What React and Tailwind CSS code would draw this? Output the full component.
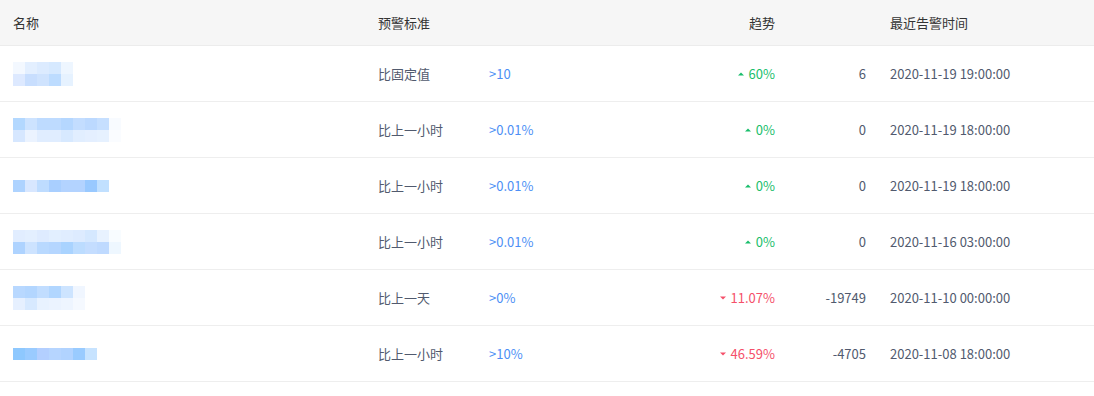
import React from "react";

const rows = [
  {
    blur: [
      ["#f3f8ff", "#e3efff", "#dcebff", "#d6e9ff", "#eef6ff"],
      ["#dde9ff", "#c8defe", "#cfe3fe", "#bddcff", "#e6f2ff"],
    ],
    crit: "比固定值",
    val: ">10",
    up: true,
    trend: "60%",
    count: "6",
    time: "2020-11-19 19:00:00",
  },
  {
    blur: [
      ["#b3d8ff", "#cde3ff", "#bedbff", "#bedbff", "#b5d7ff", "#c3ddff", "#bcd9ff", "#c6dfff", "#f8fbff"],
      ["#d6e7ff", "#ebf3ff", "#e0edff", "#e0edff", "#d7e9ff", "#e1eeff", "#e4efff", "#e6f1ff", "#fafcff"],
    ],
    crit: "比上一小时",
    val: ">0.01%",
    up: true,
    trend: "0%",
    count: "0",
    time: "2020-11-19 18:00:00",
  },
  {
    blur: [["#aed3ff", "#d8e7ff", "#bedcff", "#a9cfff", "#b3d3ff", "#b3d3ff", "#99c9ff", "#c1e0ff"]],
    crit: "比上一小时",
    val: ">0.01%",
    up: true,
    trend: "0%",
    count: "0",
    time: "2020-11-19 18:00:00",
  },
  {
    blur: [
      ["#e1edff", "#e3efff", "#deebff", "#e2efff", "#e0edff", "#ddebff", "#d5e8ff", "#e8f2ff", "#f8fcff"],
      ["#aed3ff", "#cde3ff", "#b9d9ff", "#b5d6ff", "#a9d3ff", "#bcdcff", "#c4ddff", "#bfdaff", "#eef7ff"],
    ],
    crit: "比上一小时",
    val: ">0.01%",
    up: true,
    trend: "0%",
    count: "0",
    time: "2020-11-16 03:00:00",
  },
  {
    blur: [
      ["#b8d8ff", "#b3d6ff", "#c1ddff", "#b1d6ff", "#cde4ff", "#f0f6ff"],
      ["#e6f0ff", "#d7e9ff", "#e8f2ff", "#ebf3ff", "#eef5ff", "#f5f9ff"],
    ],
    crit: "比上一天",
    val: ">0%",
    up: false,
    trend: "11.07%",
    count: "-19749",
    time: "2020-11-10 00:00:00",
  },
  {
    blur: [["#8ec8fe", "#9acbff", "#b3cfff", "#b6d5ff", "#b1d3ff", "#99cbff", "#c7e3ff"]],
    crit: "比上一小时",
    val: ">10%",
    up: false,
    trend: "46.59%",
    count: "-4705",
    time: "2020-11-08 18:00:00",
  },
];

function Blur({ blur }) {
  return (
    <div className="flex flex-col">
      {blur.map((r, i) => (
        <div key={i} className="flex">
          {r.map((c, j) => (
            <div key={j} className="w-[12px] h-[12px]" style={{ backgroundColor: c }} />
          ))}
        </div>
      ))}
    </div>
  );
}

function Arrow({ up }) {
  return up ? (
    <svg width="6" height="4" viewBox="0 0 6 4" className="mr-[5px]">
      <path d="M3 0.5 L6 3.5 L0 3.5 Z" fill="#19be6b" />
    </svg>
  ) : (
    <svg width="6" height="4" viewBox="0 0 6 4" className="mr-[5px]">
      <path d="M0 0.5 L6 0.5 L3 3.5 Z" fill="#f5506a" />
    </svg>
  );
}

export default function App() {
  return (
    <div
      className="w-[1094px] h-[396px] bg-white text-[13px] text-[#515a6e]"
      style={{ fontFamily: '"Noto Sans CJK SC", "Noto Sans", sans-serif' }}
    >
      <div className="flex h-[46px] items-center bg-[#f6f6f6] border-b border-[#ececec] text-[#333]">
        <div className="w-[366px] pl-[13px]">名称</div>
        <div className="w-[111px] pl-[12px]">预警标准</div>
        <div className="w-[110px]"></div>
        <div className="w-[200px] pr-[12px] text-right">趋势</div>
        <div className="w-[91px]"></div>
        <div className="pl-[12px]">最近告警时间</div>
      </div>
      {rows.map((r, i) => (
        <div key={i} className="flex h-[56px] items-center border-b border-[#eeeeee]">
          <div className="w-[366px] pl-[13px]">
            <Blur blur={r.blur} />
          </div>
          <div className="w-[111px] pl-[12px]">{r.crit}</div>
          <div className="w-[110px] pl-[12px] text-[#4d8ff5]">{r.val}</div>
          <div
            className={`w-[200px] pr-[12px] flex items-center justify-end ${
              r.up ? "text-[#19be6b]" : "text-[#f5506a]"
            }`}
          >
            <Arrow up={r.up} />
            {r.trend}
          </div>
          <div className="w-[91px] pr-[12px] text-right">{r.count}</div>
          <div className="pl-[12px]">{r.time}</div>
        </div>
      ))}
    </div>
  );
}
